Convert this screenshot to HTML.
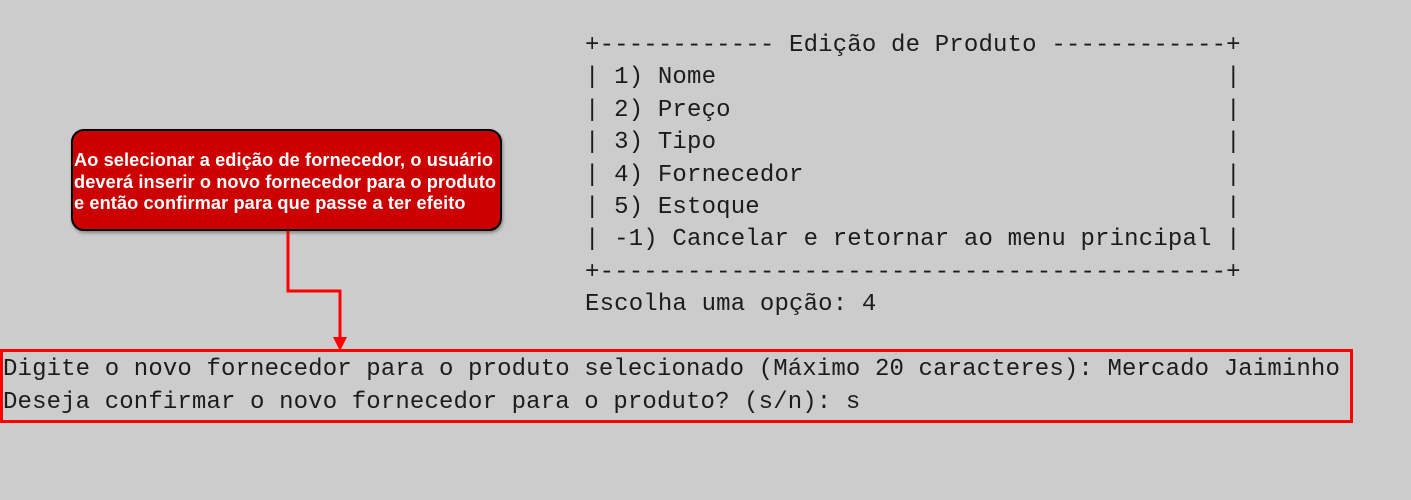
<!DOCTYPE html>
<html><head><meta charset="utf-8"><style>
body{margin:0;width:1411px;height:500px;background:#cccccc;position:relative;overflow:hidden}
.t{position:absolute;font-family:"Liberation Mono",monospace;font-size:24px;color:#1c1c1c;white-space:pre;line-height:32.4px;letter-spacing:0.17px}
.call{position:absolute;left:71px;top:129px;width:427px;height:98px;background:#cc0000;border:2px solid #000;border-radius:13px;box-shadow:1px 2px 3px rgba(0,0,0,.35)}
.call div{position:absolute;left:1px;top:19px;font-family:"Liberation Sans",sans-serif;font-weight:bold;font-size:18.2px;line-height:21.5px;color:#fff;white-space:pre;letter-spacing:0.1px}
.box{position:absolute;left:0;top:349px;width:1347px;height:68px;border:3px solid #ff0000}
</style></head><body>
<div class="t" style="left:585px;top:30px">+------------ Edição de Produto ------------+
| 1) Nome                                   |
| 2) Preço                                  |
| 3) Tipo                                   |
| 4) Fornecedor                             |
| 5) Estoque                                |
| -1) Cancelar e retornar ao menu principal |
+-------------------------------------------+
Escolha uma opção: 4</div>
<div class="call"><div>Ao selecionar a edição de fornecedor, o usuário
deverá inserir o novo fornecedor para o produto
e então confirmar para que passe a ter efeito</div></div>
<svg style="position:absolute;left:0;top:0" width="1411" height="500">
<polyline points="288,231 288,291 340,291 340,340" fill="none" stroke="#ff0000" stroke-width="3"/>
<polygon points="333,337 347,337 340,351" fill="#ff0000"/>
</svg>
<div class="box"></div>
<div class="t" style="left:3px;top:353px;line-height:33px;letter-spacing:0.13px">Digite o novo fornecedor para o produto selecionado (Máximo 20 caracteres): Mercado Jaiminho
Deseja confirmar o novo fornecedor para o produto? (s/n): s</div>
</body></html>
